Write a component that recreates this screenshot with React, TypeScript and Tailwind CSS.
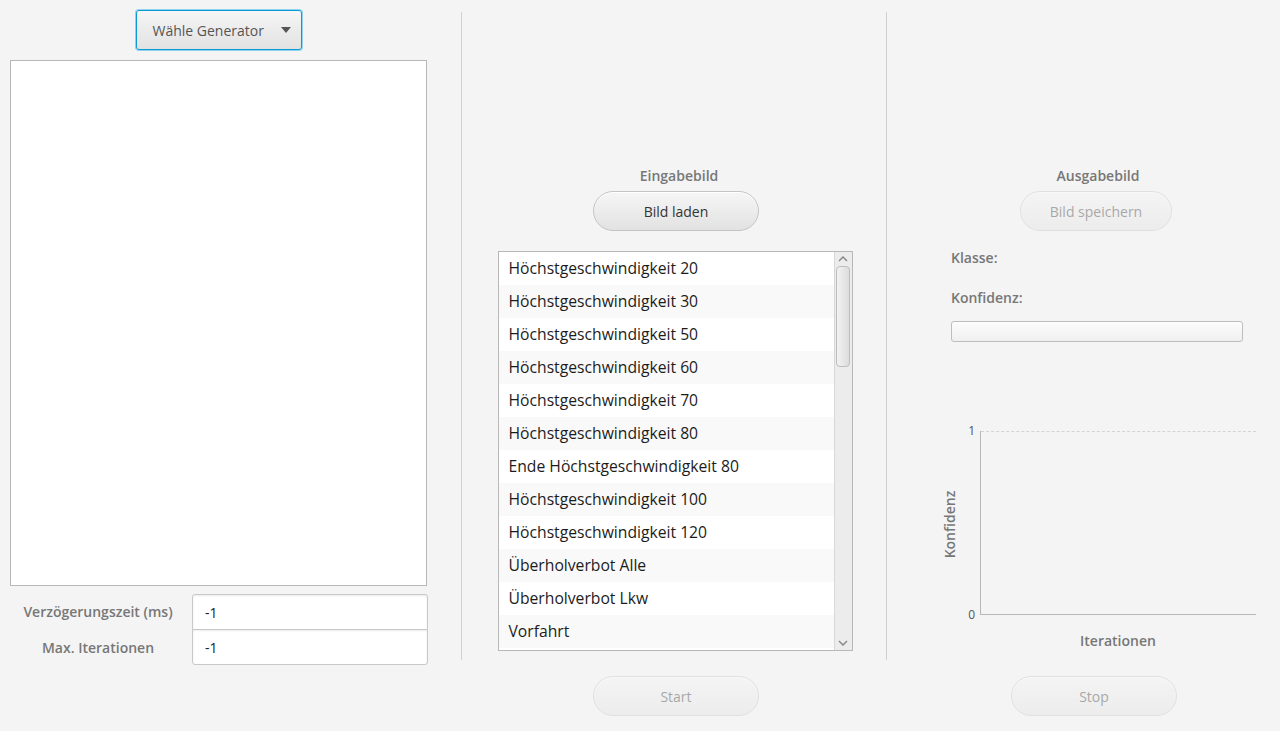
import React from 'react';

const FONT = { fontFamily: '"Open Sans", "Noto Sans", sans-serif' };

const SIGNS = [
  'Höchstgeschwindigkeit 20',
  'Höchstgeschwindigkeit 30',
  'Höchstgeschwindigkeit 50',
  'Höchstgeschwindigkeit 60',
  'Höchstgeschwindigkeit 70',
  'Höchstgeschwindigkeit 80',
  'Ende Höchstgeschwindigkeit 80',
  'Höchstgeschwindigkeit 100',
  'Höchstgeschwindigkeit 120',
  'Überholverbot Alle',
  'Überholverbot Lkw',
  'Vorfahrt',
];

/**
 * Modena-like pill button
 */
function PillButton({ label, disabled, width }: { label: string; disabled?: boolean; width: string }) {
  return (
    <button
      type="button"
      className={`${width} h-10 rounded-[20px] border border-[#c4c4c4] bg-gradient-to-b from-[#f6f6f6] to-[#e2e2e2] text-[14px] text-[#333] shadow-[inset_0_1px_0_#fff] ${
        disabled ? 'opacity-40' : ''
      }`}
    >
      {label}
    </button>
  );
}

function TextField({ value, first }: { value: string; first?: boolean }) {
  return (
    <div
      className={`h-[36px] flex-1 bg-white border border-[#c8c8c8] px-3 flex items-center text-[14px] text-[#222] shadow-[inset_0_1px_2px_rgba(0,0,0,0.08)] ${
        first ? 'rounded-t-[3px]' : 'rounded-b-[3px] -mt-px'
      }`}
    >
      {value}
    </div>
  );
}

function ScrollBar() {
  return (
    <div className="w-[18px] h-full bg-[#ececec] border-l border-[#d8d8d8] flex flex-col items-center">
      <div className="h-[14px] flex items-center justify-center">
        <svg width="10" height="6" viewBox="0 0 10 6">
          <path d="M1 5 L5 1 L9 5" fill="none" stroke="#8a8a8a" strokeWidth="1.5" />
        </svg>
      </div>
      <div className="w-[14px] h-[101px] rounded-[4px] border border-[#bdbdbd] bg-gradient-to-r from-[#f2f2f2] to-[#dcdcdc]" />
      <div className="flex-1" />
      <div className="h-[14px] flex items-center justify-center">
        <svg width="10" height="6" viewBox="0 0 10 6">
          <path d="M1 1 L5 5 L9 1" fill="none" stroke="#8a8a8a" strokeWidth="1.5" />
        </svg>
      </div>
    </div>
  );
}

function LeftColumn() {
  return (
    <div className="w-[461px] flex flex-col pl-[10px] pr-[34px] pt-[10px]">
      <div className="flex justify-center">
        <button
          type="button"
          className="w-[166px] h-10 rounded-[3px] border border-[#0a9bd4] bg-gradient-to-b from-[#f6f6f6] to-[#e2e2e2] flex items-center pl-4 pr-[10px] text-[14px] text-[#555] shadow-[0_0_0_1px_#8fd3f0]"
        >
          <span className="flex-1 text-left">Wähle Generator</span>
          <svg width="10" height="6" viewBox="0 0 10 6">
            <path d="M0 0 L10 0 L5 6 Z" fill="#555" />
          </svg>
        </button>
      </div>
      <div className="mt-[10px] w-[417px] h-[526px] bg-white border border-[#b8b8b8]" />
      <div className="mt-[8px] flex w-[418px]">
        <div className="w-[182px] pr-[6px] flex flex-col text-[14px] text-[#777] font-semibold">
          <div className="h-[35px] flex items-center justify-center">Verzögerungszeit (ms)</div>
          <div className="h-[36px] flex items-center justify-center">Max. Iterationen</div>
        </div>
        <div className="flex-1 flex flex-col">
          <TextField value="-1" first />
          <TextField value="-1" />
        </div>
      </div>
    </div>
  );
}

function MiddleColumn() {
  return (
    <div className="w-[424px] flex flex-col items-center pt-[166px] pl-[18px] pr-[16px]">
      <div className="text-[14px] font-semibold text-[#777] leading-5 ml-[8px]">Eingabebild</div>
      <div className="mt-[5px] ml-[2px]">
        <PillButton label="Bild laden" width="w-[166px]" />
      </div>
      <div className="mt-[20px] w-[355px] h-[400px] border border-[#b8b8b8] bg-white flex overflow-hidden">
        <div className="flex-1 flex flex-col overflow-hidden">
          {SIGNS.map((s, i) => (
            <div
              key={s}
              className={`h-[33px] shrink-0 flex items-center px-[10px] text-[15.7px] text-[#1c1c1c] whitespace-nowrap ${
                i % 2 === 1 ? 'bg-[#f9f9f9]' : 'bg-white'
              }`}
            >
              {s}
            </div>
          ))}
        </div>
        <ScrollBar />
      </div>
      <div className="mt-[25px] ml-[2px]">
        <PillButton label="Start" disabled width="w-[166px]" />
      </div>
    </div>
  );
}

function Chart() {
  return (
    <div className="flex w-[311px] h-[240px]">
      <div className="w-[20px] pr-[10px] pb-[30px] flex items-center justify-center">
        <div className="-rotate-90 text-[14px] font-semibold text-[#777] whitespace-nowrap">Konfidenz</div>
      </div>
      <div className="flex-1 flex flex-col">
        <div className="flex h-[196px] pt-[12px]">
          <div className="w-[15px] flex flex-col justify-between text-[12px] text-[#555] leading-none -mt-[6px] -mb-[6px]">
            <span className="text-right pr-[5px]">1</span>
            <span className="text-right pr-[5px]">0</span>
          </div>
          <div className="flex-1 border-l border-b border-[#b8b8b8] relative">
            <div className="absolute top-0 left-0 right-0 border-t border-dashed border-[#d4d4d4]" />
          </div>
        </div>
        <div className="pl-[15px] flex justify-center mt-[15px] text-[14px] font-semibold text-[#777]">
          Iterationen
        </div>
      </div>
    </div>
  );
}

function RightColumn() {
  return (
    <div className="flex-1 flex flex-col pt-[166px] pl-[64px]">
      <div className="w-[292px] flex flex-col items-center">
        <div className="text-[14px] font-semibold text-[#777] leading-5 ml-[2px]">Ausgabebild</div>
        <div className="mt-[5px] ml-[-2px]">
          <PillButton label="Bild speichern" disabled width="w-[152px]" />
        </div>
      </div>
      <div className="mt-[17px] text-[14px] font-semibold text-[#777] leading-5">Klasse:</div>
      <div className="mt-[20px] text-[14px] font-semibold text-[#777] leading-5">Konfidenz:</div>
      <div className="mt-[13px] w-[292px] h-[21px] rounded-[3px] border border-[#bdbdbd] bg-gradient-to-b from-[#fdfdfd] to-[#efefef]" />
      <div className="mt-[77px] -ml-[6px]">
        <Chart />
      </div>
      <div className="mt-[17px] ml-[60px]">
        <PillButton label="Stop" disabled width="w-[166px]" />
      </div>
    </div>
  );
}

export default function App() {
  return (
    <div style={FONT} className="w-[1280px] h-[731px] bg-[#f4f4f4] flex overflow-hidden">
      <LeftColumn />
      <div className="w-px bg-[#d0d0d0] mt-[12px] h-[648px]" />
      <MiddleColumn />
      <div className="w-px bg-[#d0d0d0] mt-[12px] h-[648px]" />
      <RightColumn />
    </div>
  );
}
